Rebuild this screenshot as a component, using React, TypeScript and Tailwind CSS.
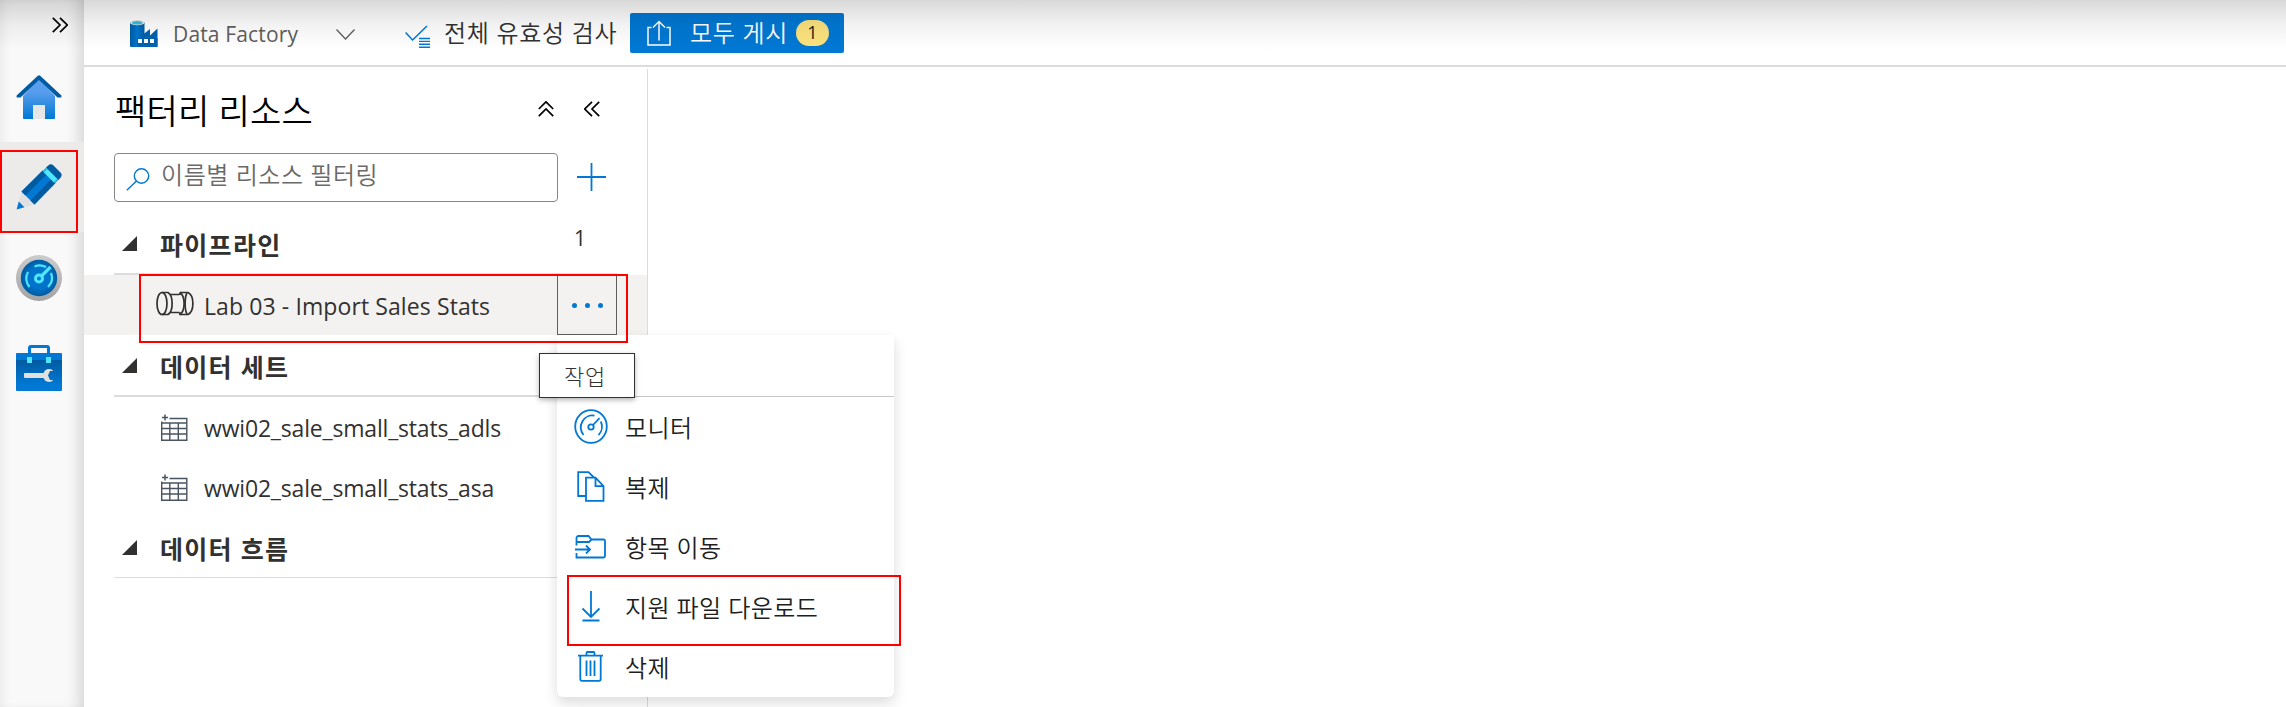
import React from "react";

const ui = "font-['Open_Sans','Noto_Sans_CJK_KR',sans-serif]";

function DoubleChevron({ className }: { className: string }) {
  return (
    <svg className={className} width="16" height="16" viewBox="0 0 16 16" fill="none" stroke="currentColor" strokeWidth="1.7">
      <path d="M0.8 0.8 8 8 0.8 15.2M8 0.8 15.2 8 8 15.2" />
    </svg>
  );
}

function HomeIcon() {
  return (
    <svg width="46" height="46" viewBox="0 0 46 46">
      <defs>
        <linearGradient id="home" x1="0" y1="0" x2="0" y2="1">
          <stop offset="0" stopColor="#5ea0ef" />
          <stop offset="0.35" stopColor="#559cec" />
          <stop offset="1" stopColor="#0078d4" />
        </linearGradient>
      </defs>
      <path d="M7 22 23 5l16 17v22a1 1 0 0 1-1 1H8a1 1 0 0 1-1-1Z" fill="url(#home)" />
      <path d="M17 31h12v14H17Z" fill="#e6e6e6" />
      <path d="M.6 21.6 21.8 1.7a1.8 1.8 0 0 1 2.4 0l21.2 19.9v1.8h-3.9L23 6 4.5 23.400H.6Z" fill="#005ba1" />
    </svg>
  );
}

function PencilIcon() {
  return (
    <svg width="46" height="46" viewBox="0 0 46 46">
      <path d="M5.500 27.500.6 45.600 18.500 40.500Z" fill="#e0e0e0" />
      <path d="M2.800 37.500.6 45.600l7.800-2.300Z" fill="#0078d4" />
      <path d="M27 6.500 39.500 19 18.500 40.500 5.500 27.500Z" fill="#0078d4" />
      <path d="M26.500 6.500 30.500 10.500 9.500 31.500 5.500 27.500Z" fill="#005ba1" />
      <path d="M35.500 15 39.500 19 18.500 40.500 14.500 36.500Z" fill="#005ba1" />
      <path d="M30 3.600 42.500 16 39 19.500 26.500 7Z" fill="#32b8e0" />
      <path d="M31.500 5.200 41 14.600 37.500 18 28 8.600Z" fill="#50e6ff" />
      <path d="M30 3.600 32.200 1.400a4 4 0 0 1 5.300 0l7 7a4 4 0 0 1 0 5.300L42.500 16Z" fill="#005ba1" />
    </svg>
  );
}

function GaugeBlueIcon() {
  return (
    <svg width="46" height="46" viewBox="0 0 46 46" fill="none">
      <defs>
        <linearGradient id="rim" x1="0" y1="0" x2="0" y2="1">
          <stop offset="0" stopColor="#cccccc" />
          <stop offset="1" stopColor="#a3a3a3" />
        </linearGradient>
        <radialGradient id="dial">
          <stop offset="0" stopColor="#0078d4" />
          <stop offset="0.6" stopColor="#0072c9" />
          <stop offset="1" stopColor="#005ba1" />
        </radialGradient>
      </defs>
      <circle cx="23" cy="23" r="23" fill="url(#rim)" />
      <circle cx="23" cy="23" r="18.200" fill="url(#dial)" />
      <circle cx="23" cy="23.500" r="3.500" stroke="#50e6ff" strokeWidth="3" />
      <path d="m25.500 21 9-9" stroke="#50e6ff" strokeWidth="3.200" />
      <path d="M13.500 32A13 13 0 0 1 12 17M18.500 11.500A13 13 0 0 1 30 12M35 18a13 13 0 0 1-3 14" stroke="#50e6ff" strokeWidth="2.200" />
    </svg>
  );
}

function ToolboxIcon() {
  return (
    <svg width="46" height="46" viewBox="0 0 46 46">
      <defs>
        <linearGradient id="box" x1="0" y1="0" x2="0" y2="1">
          <stop offset="0" stopColor="#005ba1" />
          <stop offset="0.8" stopColor="#0078d4" />
        </linearGradient>
      </defs>
      <path d="M13.500 9V3a1.500 1.500 0 0 1 1.500-1.500h16A1.500 1.500 0 0 1 32.500 3v6" fill="none" stroke="#0078d4" strokeWidth="3" />
      <path d="M1 8h44a1 1 0 0 1 1 1v7H0V9a1 1 0 0 1 1-1Z" fill="#0078d4" />
      <path d="M0 15h46v30a1 1 0 0 1-1 1H1a1 1 0 0 1-1-1Z" fill="url(#box)" />
      <path d="M11 12h5v6h-5ZM30 12h5v6h-5Z" fill="#50e6ff" />
      <path d="M9 28h18.500a5.800 5.800 0 0 1 9.900-2H34l-2 4.500 2 4.400h3.400a5.800 5.800 0 0 1-9.900-2H9a1 1 0 0 1-1-1V29a1 1 0 0 1 1-1Z" fill="#e0e0e0" />
    </svg>
  );
}

function FactoryIcon() {
  return (
    <svg width="28" height="27" viewBox="0 0 28 27">
      <defs>
        <linearGradient id="stack">
          <stop offset="0" stopColor="#005ba1" />
          <stop offset="0.5" stopColor="#0078d4" />
          <stop offset="1" stopColor="#005ba1" />
        </linearGradient>
      </defs>
      <path d="M13 27V14.500L20 9v6.500L27.500 8.500V26a1 1 0 0 1-1 1Z" fill="#0062b1" />
      <path d="M0 2.500h14.500V27H1a1 1 0 0 1-1-1Z" fill="url(#stack)" />
      <path d="M7 18h20.500v9H7Z" fill="#0062b1" />
      <ellipse cx="7.200" cy="2.700" rx="7.200" ry="2.600" fill="#e6e6e6" />
      <ellipse cx="7.200" cy="2.800" rx="5.200" ry="1.800" fill="#32bedd" />
      <path d="M8 19h4v4H8ZM14 19h4v4h-4ZM20 19h4v4h-4Z" fill="#fff" />
    </svg>
  );
}

function ValidateIcon() {
  return (
    <svg width="25" height="23" viewBox="0 0 25 23" fill="none" stroke="#0078d4">
      <path d="m.6 7.500 7 7.500L22 1" strokeWidth="1.500" />
      <path d="M14 13.500H25M14 16.400H25M14 19.300H25M14 22.200H25" strokeWidth="1.400" />
    </svg>
  );
}

function PipelineIcon() {
  return (
    <svg width="38" height="25" viewBox="0 0 38 25" fill="none" stroke="#323130" strokeWidth="1.700">
      <ellipse cx="6" cy="12.500" rx="5" ry="11" />
      <path d="M6 1.500h6c5.500 3 5.500 19 0 22H6" />
      <path d="M14.500 3.500h9M14.500 21.500h9M24 4V1.500" />
      <path d="M24 1.500h8c6.500 3 6.500 19 0 22h-8v-2.300" />
      <path d="M24 1.500c5.500 4 5.500 18 0 22" />
      <path d="M31 2c-2.500 4-2.500 17 0 21" />
    </svg>
  );
}

function TableIcon() {
  return (
    <svg width="27" height="27" viewBox="0 0 27 27" fill="none" stroke="#4a5460">
      <path d="M4 .5v6M1 3.500h6" strokeWidth="1.500" />
      <path d="M8.500 4.500h17.300v21.800H.7V9h25" strokeWidth="1.400" />
      <path d="M8.800 9v17M17.300 9v17M1 14.500h25M1 20h25" strokeWidth="1.400" />
      <path d="M.7 7.500V10" strokeWidth="1.400" />
    </svg>
  );
}

const blue = { fill: "none", stroke: "#0078d4", strokeWidth: 1.8 };

const menuItems = [
  {
    label: "모니터",
    icon: (
      <svg width="34" height="35" viewBox="0 0 34 35" {...blue}>
        <ellipse cx="17" cy="17.500" rx="15.800" ry="16.300" />
        <circle cx="17" cy="18" r="2.700" />
        <path d="m19 16 6.500-6.800" />
        <path d="M9.500 26A11.500 12 0 0 1 20.500 6.600M26.800 12.500A12 12 0 0 1 24.500 26" />
      </svg>
    ),
  },
  {
    label: "복제",
    icon: (
      <svg width="28" height="31" viewBox="0 0 28 31" {...blue}>
        <path d="M9 25H1.200V1.200h10.300L17 6.500" />
        <path d="M9 6.700h9.500l8 8.500v14.600H9ZM18.500 6.700v8.500h8" />
      </svg>
    ),
  },
  {
    label: "항목 이동",
    icon: (
      <svg width="31" height="24" viewBox="0 0 31 24" {...blue}>
        <path d="M1.500 10.500V3a2 2 0 0 1 2-2h10l3 3.500h12a1.500 1.500 0 0 1 1.500 1.500v15a1.500 1.500 0 0 1-1.500 1.500h-27v-4.500M1.500 7H14l2.500-2.500" />
        <path d="M0 14.500h15M11 10.500l4 4-4 4" />
      </svg>
    ),
  },
  {
    label: "지원 파일 다운로드",
    icon: (
      <svg width="20" height="31" viewBox="0 0 20 31" {...blue}>
        <path d="M10 0v25.500M1.500 17.500l8.500 8.500 8.500-8.500M1.500 29.500h17" />
      </svg>
    ),
  },
  {
    label: "삭제",
    icon: (
      <svg width="25" height="31" viewBox="0 0 25 31" {...blue}>
        <path d="M0 4.700h25M8.500 4.500V2a1 1 0 0 1 1-1h6a1 1 0 0 1 1 1v2.500M2.300 5v23a1.800 1.800 0 0 0 1.800 1.800h16.800a1.800 1.800 0 0 0 1.800-1.800V5M8.500 9.500v15.500M12.500 9.500v15.500M16.500 9.500v15.500" />
      </svg>
    ),
  },
];

function GroupHeader({ title, count, line }: { title: string; count?: string; line: string }) {
  return (
    <div className={`ml-[30px] flex w-[503px] items-center border-[#dcdcdc] ${line}`}>
      <svg className="ml-2 -mt-0.5" width="15" height="15" viewBox="0 0 15 15">
        <path d="M15 0v15H0Z" fill="#323130" />
      </svg>
      <span className="ml-[23px] pt-px text-[25px] leading-[30px] font-bold tracking-[1.3px] whitespace-nowrap text-[#323130]">{title}</span>
      {count && <span className="mr-[31px] ml-auto -mt-3 text-[21px] text-[#323130]">{count}</span>}
    </div>
  );
}

function Dataset({ name }: { name: string }) {
  return (
    <div className="flex h-[60px] items-center pl-[77px]">
      <TableIcon />
      <span className="ml-4 pt-[3px] text-[23px] tracking-[-0.18px] whitespace-nowrap text-[#323130]">{name}</span>
    </div>
  );
}

export default function App() {
  return (
    <div className={`relative flex h-[707px] w-[2286px] overflow-hidden bg-white ${ui}`}>
      <nav className="relative flex w-[84px] shrink-0 flex-col bg-[#f9f9f9] shadow-[inset_-14px_0_14px_-8px_rgba(0,0,0,0.13),inset_8px_0_12px_-6px_rgba(0,0,0,0.07)]">
        <div className="flex h-[52px] justify-end pt-[17px] pr-4">
          <DoubleChevron className="text-black" />
        </div>
        <div className="flex h-[90px] items-center pl-4"><HomeIcon /></div>
        <div className="flex h-[90px] items-center bg-[#edebe9] pl-4"><PencilIcon /></div>
        <div className="flex h-[91px] items-center pl-4"><GaugeBlueIcon /></div>
        <div className="flex h-[90px] items-center pl-4"><ToolboxIcon /></div>
        <div className="absolute top-[150px] left-0 h-[83px] w-[78px] border-2 border-[#ff0000]" />
      </nav>

      <div className="flex min-w-0 grow flex-col">
        <header className="flex h-[67px] shrink-0 items-center border-b-2 border-[#dcdcdc]">
          <div className="ml-[46px] pt-0.5"><FactoryIcon /></div>
          <span className="ml-[15px] w-[126px] pt-1 text-[21px] tracking-[0.15px] whitespace-nowrap text-[#605e5c]">Data Factory</span>
          <svg className="mt-1 ml-[37px]" width="19" height="11" viewBox="0 0 19 11" fill="none" stroke="#605e5c" strokeWidth="1.300">
            <path d="m.5.5 9 9.500 9-9.500" />
          </svg>
          <div className="ml-[50px] pt-[7px]"><ValidateIcon /></div>
          <span className="ml-[14px] w-[173px] text-[24px] font-[350] tracking-[0.7px] whitespace-nowrap text-[#323130]">전체 유효성 검사</span>
          <div className="ml-[13px] flex h-10 w-[214px] items-center rounded-[2px] bg-[#0078d4]">
            <svg className="ml-[17px]" width="24" height="26" viewBox="0 0 24 26" fill="none" stroke="#fff" strokeWidth="1.500">
              <path d="M4.500 7.500H1v17.500h22V7.500h-3.500M12 20.500V1.500M6 7.500l6-6 6 6" />
            </svg>
            <span className="ml-[19px] w-[97px] text-[24px] font-[350] tracking-[0.7px] whitespace-nowrap text-white">모두 게시</span>
            <span className="ml-[9px] flex h-[26px] w-[33px] items-center justify-center rounded-full bg-[#fce37e] text-[18px] text-[#201f1e]">1</span>
          </div>
        </header>

        <div className="flex grow pt-0.5">
          <section className="flex w-[564px] flex-col border-r border-[#dcdcdc]">
            <div className="flex h-[84px] items-center pl-[31px]">
              <h1 className="w-[423px] text-[34px] font-[350] tracking-[0.2px] whitespace-nowrap text-black">팩터리 리소스</h1>
              <DoubleChevron className="-mt-1 -rotate-90 text-black" />
              <DoubleChevron className="-mt-1 ml-[30px] rotate-180 text-black" />
            </div>
            <div className="flex h-[49px] items-center">
              <div className="ml-[30px] flex h-[49px] w-[444px] items-center rounded-[4px] border border-[#8a8886]">
                <svg className="ml-[11px] mt-1" width="24" height="23" viewBox="0 0 24 23" fill="none" stroke="#0078d4" strokeWidth="1.400">
                  <circle cx="15.500" cy="8" r="7.200" />
                  <path d="M10.500 13 .8 22.200" />
                </svg>
                <span className="-mt-1.5 ml-[11px] text-[24px] font-[350] tracking-[0.55px] whitespace-nowrap text-[#6c6a68]">이름별 리소스 필터링</span>
              </div>
              <svg className="ml-[19px] -mt-0.5" width="29" height="28" viewBox="0 0 29 28" stroke="#0078d4" strokeWidth="1.800">
                <path d="M14.500 0v28M0 14h29" />
              </svg>
            </div>
            <GroupHeader title="파이프라인" count="1" line="mt-[14px] h-[59px] border-b-2" />
            <div className="flex h-[60px] items-center bg-[#f3f2f1] pl-[72px]">
              <div className="-mt-1"><PipelineIcon /></div>
              <span className="ml-[10px] w-[353px] pt-[3px] text-[23px] tracking-[0.1px] whitespace-nowrap text-[#323130]">Lab 03 - Import Sales Stats</span>
              <div className="flex h-[60px] w-[60px] items-center justify-center gap-2 border border-[#605e5c]">
                <span className="size-[5px] rounded-full bg-[#0078d4]" />
                <span className="size-[5px] rounded-full bg-[#0078d4]" />
                <span className="size-[5px] rounded-full bg-[#0078d4]" />
              </div>
            </div>
            <GroupHeader title="데이터 세트" line="h-[62px] border-b-2 pt-0.5" />
            <Dataset name="wwi02_sale_small_stats_adls" />
            <Dataset name="wwi02_sale_small_stats_asa" />
            <GroupHeader title="데이터 흐름" line="h-[61px] border-b pt-0.5" />
          </section>
          <main className="grow bg-white" />
        </div>
      </div>

      <div className="pointer-events-none absolute inset-x-0 top-0 h-[50px] bg-linear-to-b from-black/15 via-black/5 to-transparent" />

      <div className="absolute top-[335px] left-[557px] flex h-[362px] w-[337px] flex-col rounded-b-[6px] bg-white shadow-[0_6px_14px_rgba(0,0,0,0.14)]">
        <div className="h-[62px] border-b border-[#c8c6c4]" />
        {menuItems.map((item) => (
          <div key={item.label} className="flex h-[60.400px] items-center">
            <div className="ml-4 flex w-[35px] justify-center">{item.icon}</div>
            <span className="ml-[17px] pt-[3px] text-[24px] font-[350] tracking-[0.4px] whitespace-nowrap text-[#201f1e]">{item.label}</span>
          </div>
        ))}
      </div>

      <div className="absolute top-[274px] left-[139px] h-[69px] w-[489px] border-2 border-[#ff0000]" />
      <div className="absolute top-[575px] left-[567px] h-[71px] w-[334px] border-2 border-[#ff0000]" />
      <div className="absolute top-[353px] left-[539px] flex h-[45px] w-[96px] items-center justify-center border border-[#323130] bg-white pt-0.5 pr-1 text-[22px] font-light tracking-[0.8px] text-[#323130] shadow-[0_2px_5px_rgba(0,0,0,0.3)]">
        작업
      </div>
    </div>
  );
}
